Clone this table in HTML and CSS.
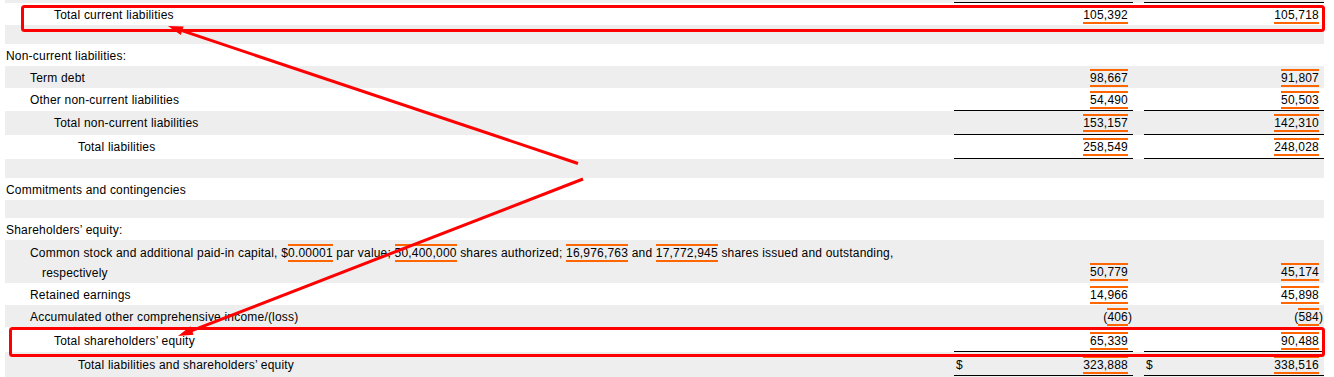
FILE: index.html
```html
<!DOCTYPE html>
<html lang="en">
<head>
<meta charset="utf-8">
<title>Balance sheet – liabilities and shareholders' equity</title>
<link rel="stylesheet" href="styles.css">
</head>
<body>
<div class="page">
  <div class="sheet">
    <div class="row alt top-row">
      <div class="lbl"></div>
      <div class="num bb"></div>
      <div class="gap"></div>
      <div class="num bb"></div>
    </div>

    <div class="row">
      <div class="lbl l2">Total current liabilities</div>
      <div class="num"><span class="cur"></span><span class="val"><span class="tag">105,392</span></span><span class="par"></span></div>
      <div class="gap"></div>
      <div class="num"><span class="cur"></span><span class="val"><span class="tag">105,718</span></span><span class="par"></span></div>
    </div>

    <div class="row alt spacer h19"></div>

    <div class="row">
      <div class="lbl l0">Non-current liabilities:</div>
    </div>

    <div class="row alt">
      <div class="lbl l1">Term debt</div>
      <div class="num"><span class="cur"></span><span class="val"><span class="tag">98,667</span></span><span class="par"></span></div>
      <div class="gap"></div>
      <div class="num"><span class="cur"></span><span class="val"><span class="tag">91,807</span></span><span class="par"></span></div>
    </div>

    <div class="row">
      <div class="lbl l1">Other non-current liabilities</div>
      <div class="num bb"><span class="cur"></span><span class="val"><span class="tag">54,490</span></span><span class="par"></span></div>
      <div class="gap"></div>
      <div class="num bb"><span class="cur"></span><span class="val"><span class="tag">50,503</span></span><span class="par"></span></div>
    </div>

    <div class="row alt">
      <div class="lbl l2 pb4">Total non-current liabilities</div>
      <div class="num bb pb4"><span class="cur"></span><span class="val"><span class="tag">153,157</span></span><span class="par"></span></div>
      <div class="gap"></div>
      <div class="num bb pb4"><span class="cur"></span><span class="val"><span class="tag">142,310</span></span><span class="par"></span></div>
    </div>

    <div class="row">
      <div class="lbl l3 pb4">Total liabilities</div>
      <div class="num bb pb4"><span class="cur"></span><span class="val"><span class="tag">258,549</span></span><span class="par"></span></div>
      <div class="gap"></div>
      <div class="num bb pb4"><span class="cur"></span><span class="val"><span class="tag">248,028</span></span><span class="par"></span></div>
    </div>

    <div class="row alt spacer h19"></div>

    <div class="row">
      <div class="lbl l0">Commitments and contingencies</div>
    </div>

    <div class="row alt spacer h18"></div>

    <div class="row">
      <div class="lbl l0">Shareholders’ equity:</div>
    </div>

    <div class="row alt">
      <div class="lbl l1h">Common stock and additional paid-in capital, $<span class="tag">0.00001</span> par value; <span class="tag">50,400,000</span> shares authorized; <span class="tag">16,976,763</span> and <span class="tag">17,772,945</span> shares issued and outstanding, respectively</div>
      <div class="num end"><span class="cur"></span><span class="val"><span class="tag">50,779</span></span><span class="par"></span></div>
      <div class="gap"></div>
      <div class="num end"><span class="cur"></span><span class="val"><span class="tag">45,174</span></span><span class="par"></span></div>
    </div>

    <div class="row">
      <div class="lbl l1">Retained earnings</div>
      <div class="num"><span class="cur"></span><span class="val"><span class="tag">14,966</span></span><span class="par"></span></div>
      <div class="gap"></div>
      <div class="num"><span class="cur"></span><span class="val"><span class="tag">45,898</span></span><span class="par"></span></div>
    </div>

    <div class="row alt">
      <div class="lbl l1">Accumulated other comprehensive income/(loss)</div>
      <div class="num"><span class="cur"></span><span class="val">(<span class="tag">406</span></span><span class="par">)</span></div>
      <div class="gap"></div>
      <div class="num"><span class="cur"></span><span class="val">(<span class="tag">584</span></span><span class="par">)</span></div>
    </div>

    <div class="row tall">
      <div class="lbl l2">Total shareholders’ equity</div>
      <div class="num bb"><span class="cur"></span><span class="val"><span class="tag">65,339</span></span><span class="par"></span></div>
      <div class="gap"></div>
      <div class="num bb"><span class="cur"></span><span class="val"><span class="tag">90,488</span></span><span class="par"></span></div>
    </div>

    <div class="row alt last">
      <div class="lbl l3">Total liabilities and shareholders’ equity</div>
      <div class="num bd"><span class="cur">$</span><span class="val"><span class="tag">323,888</span></span><span class="par"></span></div>
      <div class="gap"></div>
      <div class="num bd"><span class="cur">$</span><span class="val"><span class="tag">338,516</span></span><span class="par"></span></div>
    </div>
  </div>

  <svg class="marks" width="1334" height="377" viewBox="0 0 1334 377" aria-hidden="true">
    <rect x="22.5" y="6.5" width="1301" height="24" rx="2" ry="2" class="box"/>
    <rect x="10.5" y="328.5" width="1313" height="27" rx="2" ry="2" class="box"/>
    <line x1="578" y1="163.5" x2="177.5" y2="29.2" class="arrow"/>
    <polygon points="168,26 183.6,26.5 180.8,35.1" class="head"/>
    <line x1="583" y1="179" x2="187.3" y2="332.4" class="arrow"/>
    <polygon points="178,336 193.6,334.7 190.4,326.3" class="head"/>
  </svg>
</div>
</body>
</html>
```

FILE: styles.css
```css
* {
  box-sizing: border-box;
}

html, body {
  margin: 0;
  padding: 0;
  background: #ffffff;
}

body {
  font-family: "Liberation Sans", Arial, sans-serif;
  font-size: 12px;
  letter-spacing: 0.2px;
  color: #000000;
  overflow: hidden;
}

.page {
  position: relative;
  width: 1334px;
  height: 377px;
  overflow: hidden;
}

.sheet {
  margin-left: 5px;
  width: 1319px;
}

.row {
  display: grid;
  grid-template-columns: 949px 179px 11px 180px;
  background: #ffffff;
}

.row.alt {
  background: #eeeeee;
}

.top-row {
  height: 3px;
}

.top-row .num,
.top-row .lbl {
  padding: 0;
}

.spacer.h19 { height: 19px; }
.spacer.h18 { height: 18px; }

.lbl,
.num {
  line-height: 14px;
  padding-top: 5px;
  padding-bottom: 3px;
  white-space: nowrap;
}

.lbl.pb4,
.num.pb4 {
  padding-bottom: 4px;
}

.l0 { padding-left: 1px; }
.l1 { padding-left: 25px; }
.l2 { padding-left: 49px; }
.l3 { padding-left: 73px; }

.l1h {
  padding-left: 37px;
  text-indent: -12px;
  white-space: normal;
  line-height: 20px;
  padding-top: 3px;
  padding-bottom: 0;
  padding-right: 50px;
}

.num {
  display: grid;
  grid-template-columns: auto 1fr 5px;
  align-items: start;
}

.num.end {
  align-self: end;
  padding-bottom: 4px;
}

.num.bb {
  border-bottom: 1px solid #000000;
}

.num.bd {
  border-bottom: 3px double #000000;
}

.cur {
  padding-left: 2px;
}

.val {
  text-align: right;
}

.par {
  text-align: left;
  overflow: visible;
}

.tall .lbl,
.tall .num {
  padding-top: 7px;
  padding-bottom: 3px;
}

.last .lbl,
.last .num {
  padding-top: 6px;
  padding-bottom: 3px;
}

.tag {
  border-top: 2px solid #ff6600;
  border-bottom: 2px solid #ff6600;
}

.marks {
  position: absolute;
  left: 0;
  top: 0;
  pointer-events: none;
}

.box {
  fill: none;
  stroke: #ff0000;
  stroke-width: 3;
}

.arrow {
  stroke: #ff0000;
  stroke-width: 3;
}

.head {
  fill: #ff0000;
}
```
